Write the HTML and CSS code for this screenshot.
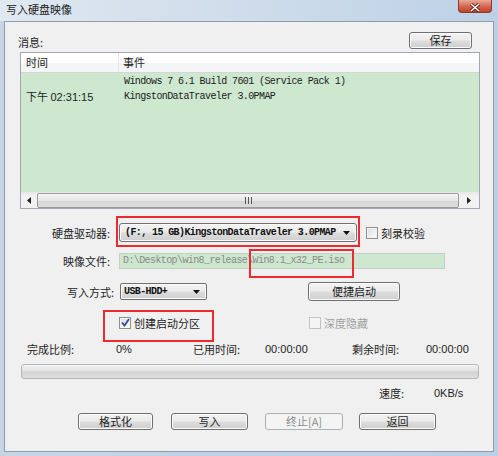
FILE: index.html
```html
<!DOCTYPE html>
<html lang="zh-CN">
	<head>
		<meta charset="UTF-8" />
		<title>写入硬盘映像</title>
		<link rel="stylesheet" href="styles.css">
	</head>
	<body>
		<div class="window">
			<div class="titlebar">
				<span class="title">写入硬盘映像</span>
				<span class="close">
					<svg width="12" height="9" viewBox="0 0 12 9"><path d="M2 1 L10 8 M10 1 L2 8" stroke="#5a2218" stroke-width="3.2"/><path d="M2 1 L10 8 M10 1 L2 8" stroke="#fff" stroke-width="1.6"/></svg>
				</span>
			</div>
			<div class="client">
				<div class="msg-head">
					<span class="msg-label">消息:</span>
					<div class="btn save">保存</div>
				</div>
				<div class="log">
					<div class="log-head">
						<div class="c1">时间</div>
						<div class="c2">事件</div>
					</div>
					<div class="log-body">
						<div class="log-row">
							<div class="c1"></div>
							<div class="c2 mono">Windows 7 6.1 Build 7601 (Service Pack 1)</div>
						</div>
						<div class="log-row">
							<div class="c1">下午 <span class="num">02:31:15</span></div>
							<div class="c2 mono">KingstonDataTraveler 3.0PMAP</div>
						</div>
					</div>
					<div class="hscroll">
						<span class="arrow"><svg width="4" height="7" viewBox="0 0 4 7"><path d="M4 0 L0 3.5 L4 7 Z" fill="#222"/></svg></span>
						<span class="thumb"><span class="grip"></span></span>
						<span class="arrow right"><svg width="4" height="7" viewBox="0 0 4 7"><path d="M0 0 L4 3.5 L0 7 Z" fill="#222"/></svg></span>
					</div>
				</div>

				<div class="row drive">
					<span class="lbl">硬盘驱动器:</span>
					<div class="combo wide marked mark-drive">
						<span class="mono">(F:, 15 GB)KingstonDataTraveler 3.0PMAP</span>
						<svg class="drop" width="7" height="4" viewBox="0 0 7 4"><path d="M0 0 L7 0 L3.5 4 Z" fill="#111"/></svg>
					</div>
					<span class="chk"></span>
					<span class="chk-text">刻录校验</span>
				</div>

				<div class="row file">
					<span class="lbl">映像文件:</span>
					<div class="field mono">D:\Desktop\win8_release\Win8.1_x32_PE.iso<span class="mark-file"></span></div>
				</div>

				<div class="row mode">
					<span class="lbl lbl-mode">写入方式:</span>
					<div class="combo small">
						<span class="mono">USB-HDD+</span>
						<svg class="drop" width="7" height="4" viewBox="0 0 7 4"><path d="M0 0 L7 0 L3.5 4 Z" fill="#111"/></svg>
					</div>
					<div class="btn quick">便捷启动</div>
				</div>

				<div class="row checks">
					<span class="check-item marked mark-part">
						<span class="chk checked"><svg width="9" height="9" viewBox="0 0 9 9"><path d="M1 4.5 L3.5 7.5 L8 1" fill="none" stroke="#2b4a9c" stroke-width="1.8"/></svg></span>
						<span class="chk-text">创建启动分区</span>
					</span>
					<span class="check-item hidden-opt">
						<span class="chk disabled"></span>
						<span class="chk-text dim">深度隐藏</span>
					</span>
				</div>

				<div class="stats">
					<span>完成比例:</span>
					<span class="num">0%</span>
					<span>已用时间:</span>
					<span class="num">00:00:00</span>
					<span>剩余时间:</span>
					<span class="num">00:00:00</span>
				</div>

				<div class="progress"></div>

				<div class="speed">
					<span>速度:</span>
					<span class="num">0KB/s</span>
				</div>

				<div class="actions">
					<div class="btn act-format">格式化</div>
					<div class="btn act-write">写入</div>
					<div class="btn act-stop off">终止[A]</div>
					<div class="btn act-back">返回</div>
				</div>
			</div>
		</div>
	</body>
</html>
```

FILE: styles.css
```css
* {
	box-sizing: border-box;
}
body {
	margin: 0;
	font-family: "Noto Sans CJK SC", sans-serif;
	font-size: 11px;
	color: #1e1e1e;
	background-color: #fff;
}
.window {
	width: 498px;
	height: 456px;
	background: linear-gradient(to right, #c8d5e3, #bccfe2);
	display: flex;
	flex-direction: column;
}
.titlebar {
	height: 21px;
	flex: none;
	display: flex;
	justify-content: space-between;
	align-items: flex-start;
	background: linear-gradient(to right, #e0e9f2 0%, #d5e0ec 30%, #cbdaea 60%, #bdd1e6 100%);
}
.title {
	margin: 2px 0 0 6px;
	line-height: 14px;
	color: #1a1a1a;
}
.close {
	width: 34px;
	height: 13px;
	margin-right: 6px;
	border: 1px solid #8c3a2c;
	border-top: 0;
	border-radius: 0 0 4px 4px;
	background: linear-gradient(#eaa898, #d56a53 50%, #c2402a);
	display: flex;
	align-items: flex-end;
	justify-content: center;
}
.client {
	margin: 0 4px;
	height: 431px;
	border: 1px solid #8e9cab;
	background-color: #f0f0f0;
	display: flex;
	flex-direction: column;
}

/* message list */
.msg-head {
	display: flex;
	align-items: center;
	height: 17px;
	margin-top: 10px;
	padding-left: 13px;
}
.msg-label {
	margin-top: 3px;
}
.btn {
	height: 17px;
	border: 1px solid #707070;
	border-radius: 3px;
	background: linear-gradient(#f3f3f3 0%, #ebebeb 48%, #dddddd 52%, #cfcfcf 100%);
	box-shadow: inset 0 0 0 1px #fbfbfb;
	line-height: 15px;
	text-align: center;
	flex: none;
}
.save {
	margin-left: auto;
	margin-right: 21px;
	width: 63px;
}
.log {
	margin: 3px 0 0 15px;
	width: 460px;
	height: 157px;
	flex: none;
	border: 1px solid #a2a8ae;
	background-color: #fff;
	display: flex;
	flex-direction: column;
}
.log-head {
	height: 20px;
	display: flex;
	line-height: 19px;
	background: linear-gradient(#ffffff 50%, #f4f5f7 50%);
	border-bottom: 1px solid #d5d5d5;
}
.c1 {
	width: 98px;
	padding-left: 5px;
	flex: none;
}
.log-head .c1 {
	border-right: 1px solid #e3e8ee;
}
.c2 {
	padding-left: 4px;
	white-space: nowrap;
}
.log-body {
	flex: 1;
	padding-top: 1px;
	background-color: #cde8cf;
}
.log-row {
	display: flex;
	height: 15px;
	line-height: 15px;
}
.log-row .c2 {
	padding-left: 5px;
}
.mono {
	font-family: "Liberation Mono", monospace;
	font-size: 10px;
	letter-spacing: -0.6px;
	color: #202020;
}
.num {
	font-family: "Liberation Sans", sans-serif;
	font-size: 11px;
}
.hscroll {
	height: 16px;
	flex: none;
	display: flex;
	align-items: center;
	background: linear-gradient(#e6e6e6, #f2f2f2 25%, #f2f2f2);
}
.arrow {
	width: 16px;
	display: flex;
	justify-content: center;
}
.arrow.right {
	flex: 1;
}
.thumb {
	width: 422px;
	height: 15px;
	border: 1px solid #9b9b9b;
	border-radius: 2px;
	background: linear-gradient(#f6f6f6, #e6e6e6 50%, #d6d6d6 51%, #dcdcdc);
	display: flex;
	align-items: center;
	justify-content: center;
}
.grip {
	width: 7px;
	height: 7px;
	background: repeating-linear-gradient(to right, #555 0 1px, transparent 1px 3px);
}

/* form rows */
.row {
	display: flex;
	align-items: center;
	flex: none;
}
.lbl {
	width: 105px;
	text-align: right;
	flex: none;
}
.lbl-mode {
	width: 109px;
}
.drive {
	margin-top: 14px;
	height: 19px;
}
.combo {
	position: relative;
	height: 19px;
	border: 1px solid #707070;
	border-radius: 3px;
	background: linear-gradient(#f3f3f3 0%, #ebebeb 48%, #dddddd 52%, #cfcfcf 100%);
	box-shadow: inset 0 0 0 1px #fbfbfb;
	display: flex;
	align-items: center;
	padding-left: 5px;
	flex: none;
}
.combo .mono {
	color: #111;
	font-weight: bold;
}
.drop {
	position: absolute;
	right: 6px;
	top: 7px;
}
.wide {
	margin-left: 9px;
	width: 238px;
}
.small {
	margin-left: 6px;
	width: 87px;
	height: 17px;
	border-radius: 2px;
	padding-left: 3px;
}
.small .drop {
	top: 6px;
}
.chk {
	width: 12px;
	height: 12px;
	border: 1px solid #8e8f8f;
	background: linear-gradient(135deg, #dcdcdc, #fdfdfd);
	box-shadow: inset 0 0 0 1px #f4f4f4;
	display: flex;
	align-items: center;
	justify-content: center;
	flex: none;
}
.drive .chk {
	margin-left: 9px;
}
.chk-text {
	margin-left: 3px;
	font-size: 11px;
}
.chk.disabled {
	border-color: #c2c2c2;
	background: #f4f4f4;
}
.dim {
	color: #a0a0a0;
}
.file {
	margin-top: 11px;
	height: 16px;
}
.field {
	position: relative;
	margin-left: 9px;
	width: 326px;
	height: 16px;
	line-height: 14px;
	padding-left: 3px;
	border: 1px solid #c3cfc4;
	background-color: #cde8cf;
	color: #8a8a8a;
	white-space: nowrap;
}
.mode {
	margin-top: 13px;
	height: 19px;
}
.quick {
	margin-left: 101px;
	width: 92px;
	height: 19px;
	line-height: 17px;
}
.checks {
	margin-top: 15px;
	height: 13px;
	padding-left: 114px;
}
.check-item {
	display: flex;
	align-items: center;
}
.hidden-opt {
	margin-left: 109px;
}

/* red marks over the screenshot */
.marked {
	position: relative;
}
.marked::after {
	content: "";
	position: absolute;
	border: 2px solid #ee2a2e;
}
.mark-drive::after {
	top: -8px;
	right: -4px;
	bottom: -6px;
	left: -4px;
}
.mark-part::after {
	top: -5px;
	right: -14px;
	bottom: -11px;
	left: -16px;
}
.mark-file {
	position: absolute;
	left: 129px;
	top: -5px;
	width: 105px;
	height: 29px;
	border: 2px solid #ee2a2e;
}

/* progress area */
.stats {
	margin-top: 13px;
	height: 14px;
	line-height: 14px;
	padding-left: 22px;
	display: grid;
	grid-template-columns: 89px 77px 72px 87px 74px auto;
	flex: none;
}
.progress {
	margin: 8px 0 0 16px;
	width: 458px;
	height: 15px;
	flex: none;
	border: 1px solid #b7b7b7;
	border-radius: 3px;
	background: linear-gradient(#f3f3f3, #e2e2e2 45%, #d3d3d3 55%, #dedede);
}
.speed {
	margin-top: 7px;
	height: 14px;
	line-height: 14px;
	padding-left: 374px;
	display: grid;
	grid-template-columns: 55px auto;
	flex: none;
}
.actions {
	margin-top: 13px;
	display: flex;
	flex: none;
	padding-left: 73px;
}
.act-format {
	width: 75px;
}
.act-write {
	margin-left: 18px;
	width: 77px;
}
.act-stop {
	margin-left: 17px;
	width: 78px;
}
.act-back {
	margin-left: 16px;
	width: 77px;
}
.btn.off {
	border-color: #adb2b5;
	background: #f4f4f4;
	box-shadow: none;
	color: #8d8d8d;
}
```
